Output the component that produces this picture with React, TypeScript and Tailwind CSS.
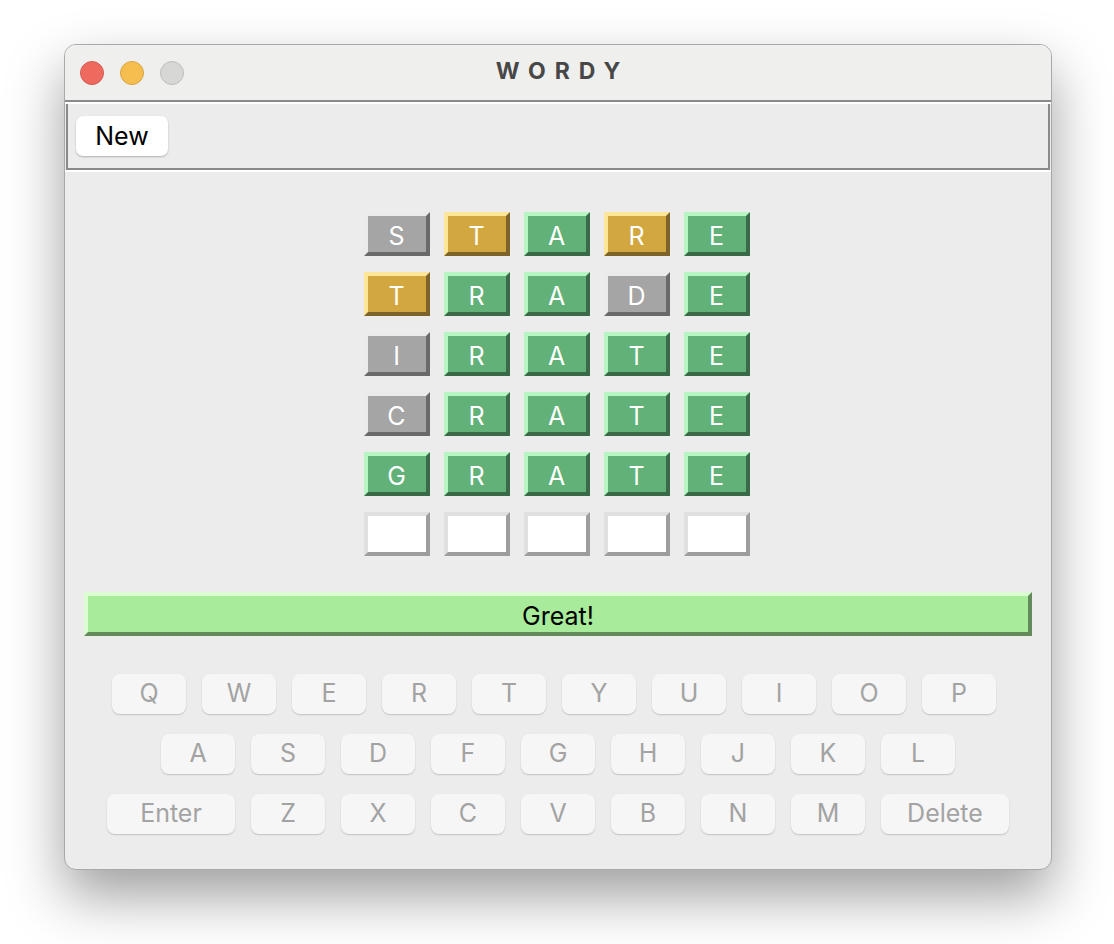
import React from 'react';

type Tone = 'green' | 'yellow' | 'gray' | 'empty';

const rows: [string, Tone][][] = [
  [['S', 'gray'], ['T', 'yellow'], ['A', 'green'], ['R', 'yellow'], ['E', 'green']],
  [['T', 'yellow'], ['R', 'green'], ['A', 'green'], ['D', 'gray'], ['E', 'green']],
  [['I', 'gray'], ['R', 'green'], ['A', 'green'], ['T', 'green'], ['E', 'green']],
  [['C', 'gray'], ['R', 'green'], ['A', 'green'], ['T', 'green'], ['E', 'green']],
  [['G', 'green'], ['R', 'green'], ['A', 'green'], ['T', 'green'], ['E', 'green']],
  [['', 'empty'], ['', 'empty'], ['', 'empty'], ['', 'empty'], ['', 'empty']],
];

const toneClass: Record<Tone, string> = {
  green: 'bg-[#61b178] border-t-[#b5f6c3] border-l-[#b5f6c3] border-b-[#3b6a48] border-r-[#3b6a48]',
  yellow: 'bg-[#d3a73f] border-t-[#fde69a] border-l-[#fde69a] border-b-[#7d6229] border-r-[#7d6229]',
  gray: 'bg-[#a5a5a5] border-t-[#ebebeb] border-l-[#ebebeb] border-b-[#6a6a6a] border-r-[#6a6a6a]',
  empty: 'bg-white border-t-[#e0e0e0] border-l-[#e0e0e0] border-b-[#9d9d9d] border-r-[#9d9d9d]',
};

function Tile({ letter, tone }: { letter: string; tone: Tone }) {
  return (
    <div
      className={`w-[66px] h-[44px] border-4 pt-[5px] flex items-center justify-center text-white text-[25px] leading-none ${toneClass[tone]}`}
    >
      {letter}
    </div>
  );
}

function Key({ label, wide }: { label: string; wide?: boolean }) {
  return (
    <div
      className={`${wide ? 'w-[128px]' : 'w-[74px]'} h-[40px] rounded-lg bg-[#f6f6f6] shadow-[0_1px_1.5px_rgba(0,0,0,0.18)] flex items-center justify-center text-[25px] text-[#a3a3a3]`}
    >
      {label}
    </div>
  );
}

export default function App() {
  return (
    <div className="min-h-screen w-full bg-white pt-[44px] pl-[64px]" style={{ fontFamily: 'Inter, "Liberation Sans", sans-serif' }}>
      {/* window */}
      <div className="w-[988px] h-[826px] rounded-[12px] border border-[#a9a9a9] bg-[#ececec] overflow-hidden shadow-[0_26px_56px_rgba(0,0,0,0.38)] flex flex-col">
        {/* title bar */}
        <div className="relative h-[55px] bg-[#efefee] flex items-center pl-[15px] gap-4">
          <span className="w-6 h-6 rounded-full bg-[#ee6a5f] border border-[#d35a4f]" />
          <span className="w-6 h-6 rounded-full bg-[#f5be4f] border border-[#d8a343]" />
          <span className="w-6 h-6 rounded-full bg-[#d7d7d6] border border-[#bdbdbd]" />
          <div className="absolute inset-0 flex items-center justify-center pl-[9px] pb-[2px] text-[23px] font-bold tracking-[9px] text-[#474747]">
            WORDY
          </div>
        </div>

        {/* toolbar */}
        <div className="border-t-2 border-[#8a8a8a]">
          <div className="border-t-2 border-white">
            <div className="mx-[1px] h-[66px] border-l-2 border-r-2 border-b-2 border-[#8a8a8a] pl-[8px] pt-[12px]">
              <button className="w-[92px] h-[40px] rounded-[7px] bg-white shadow-[0_1px_2px_rgba(0,0,0,0.25)] text-[25px] leading-none text-black">
                New
              </button>
            </div>
            <div className="h-[2px] bg-white" />
          </div>
        </div>

        {/* board */}
        <div className="flex flex-col items-center pt-[40px] gap-4 pr-[3px]">
          {rows.map((row, i) => (
            <div key={i} className="flex gap-[14px]">
              {row.map(([l, t], j) => (
                <Tile key={j} letter={l} tone={t} />
              ))}
            </div>
          ))}
        </div>

        {/* status */}
        <div className="mx-[19px] mt-[36px] h-[44px] border-4 pt-[5px] border-t-[#dbfbd3] border-l-[#dbfbd3] border-b-[#628a5a] border-r-[#628a5a] bg-[#a7eb9b] flex items-center justify-center text-[25px] leading-none text-black">
          Great!
        </div>

        {/* keyboard */}
        <div className="mt-[38px] flex flex-col items-center gap-5">
          <div className="flex gap-4 pr-[8px]">
            {'QWERTYUIOP'.split('').map((k) => (
              <Key key={k} label={k} />
            ))}
          </div>
          <div className="flex gap-4">
            {'ASDFGHJKL'.split('').map((k) => (
              <Key key={k} label={k} />
            ))}
          </div>
          <div className="flex gap-4">
            <Key label="Enter" wide />
            {'ZXCVBNM'.split('').map((k) => (
              <Key key={k} label={k} />
            ))}
            <Key label="Delete" wide />
          </div>
        </div>
      </div>
    </div>
  );
}
